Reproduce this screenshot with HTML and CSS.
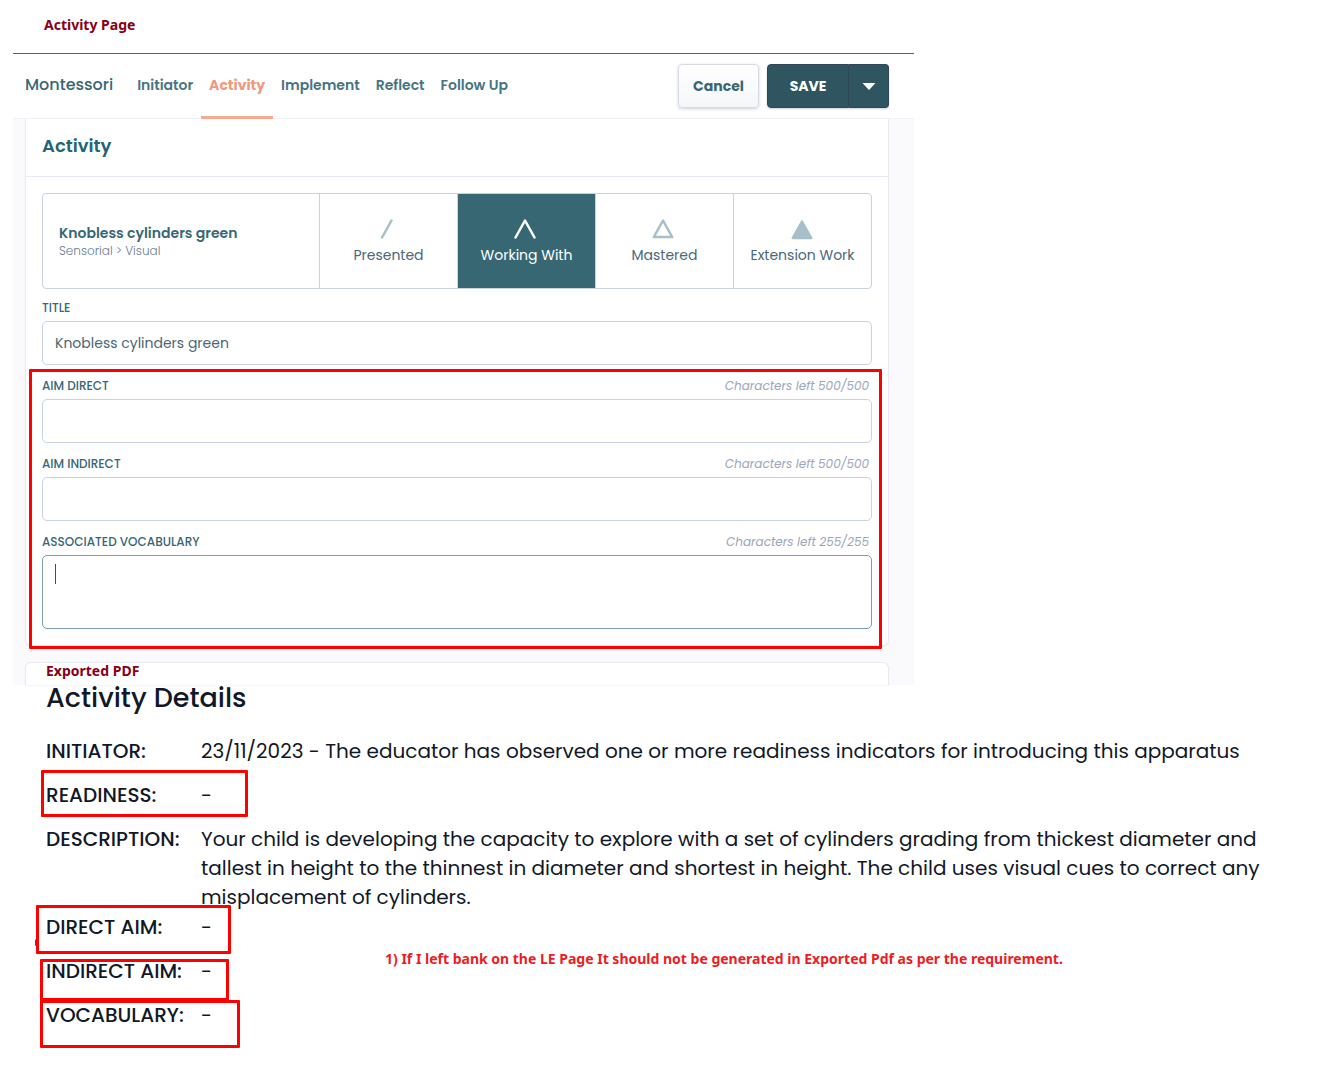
FILE: index.html
```html
<!DOCTYPE html>
<html lang="en">
<head>
<meta charset="utf-8">
<title>Activity Page</title>
<link rel="stylesheet" href="styles.css">
</head>
<body>
<main class="page">
  <h1 class="note page-note">Activity Page</h1>

  <section class="app">
    <header class="topbar">
      <span class="brand">Montessori</span>
      <nav class="tabs">
        <a class="tab" href="#initiator">Initiator</a>
        <a class="tab tab-active" href="#activity">Activity</a>
        <a class="tab" href="#implement">Implement</a>
        <a class="tab" href="#reflect">Reflect</a>
        <a class="tab" href="#follow-up">Follow Up</a>
      </nav>
      <div class="actions">
        <button class="btn btn-cancel" type="button">Cancel</button>
        <div class="split">
          <button class="btn btn-save" type="button">SAVE</button>
          <button class="btn btn-more" type="button" aria-label="More save options">
            <svg width="14" height="7" viewBox="0 0 14 7"><path d="M0.500 0h13L7 7z" fill="#fff"/></svg>
          </button>
        </div>
      </div>
    </header>

    <div class="content">
      <form class="card" id="activity">
        <h2 class="card-title">Activity</h2>
        <div class="card-body">
          <div class="status">
            <div class="lesson">
              <strong class="lesson-name">Knobless cylinders green</strong>
              <span class="lesson-path">Sensorial &gt; Visual</span>
            </div>
            <button class="state" type="button">
              <svg class="state-icon" viewBox="0 0 24 22"><path d="M6 19.500L15.500 2.500" /></svg>
              Presented
            </button>
            <button class="state state-on" type="button" aria-pressed="true">
              <svg class="state-icon" viewBox="0 0 24 22"><path d="M1.500 19.500L11 2.500L20.500 19.500"/></svg>
              Working With
            </button>
            <button class="state" type="button">
              <svg class="state-icon" viewBox="0 0 24 22"><path d="M11 2.500L1.800 19H20.200Z"/></svg>
              Mastered
            </button>
            <button class="state" type="button">
              <svg class="state-icon" viewBox="0 0 24 22"><path class="solid" d="M12 3.500L2.800 20H21.200Z"/></svg>
              Extension Work
            </button>
          </div>

          <div class="field field-title">
            <div class="field-head"><label for="title">TITLE</label></div>
            <input class="control" id="title" type="text" value="Knobless cylinders green">
          </div>

          <div class="flagged-fields">
            <div class="field">
              <div class="field-head"><label for="direct">AIM DIRECT</label><span class="left">Characters left 500/500</span></div>
              <input class="control" id="direct" type="text">
            </div>
            <div class="field">
              <div class="field-head"><label for="indirect">AIM INDIRECT</label><span class="left">Characters left 500/500</span></div>
              <input class="control" id="indirect" type="text">
            </div>
            <div class="field">
              <div class="field-head"><label for="vocabulary">ASSOCIATED VOCABULARY</label><span class="left">Characters left 255/255</span></div>
              <div class="area">
                <textarea class="control control-area" id="vocabulary"></textarea>
                <span class="caret"></span>
              </div>
            </div>
          </div>
        </div>
      </form>

      <div class="card card-next">
        <p class="note">Exported PDF</p>
      </div>
    </div>
  </section>

  <section class="export">
    <h2 class="export-title">Activity Details</h2>
    <dl class="details">
      <div class="row"><dt>INITIATOR:</dt><dd>23/11/2023 - The educator has observed one or more readiness indicators for introducing this apparatus</dd></div>
      <div class="row mark mark-readiness"><dt>READINESS:</dt><dd>-</dd></div>
      <div class="row"><dt>DESCRIPTION:</dt><dd>Your child is developing the capacity to explore with a set of cylinders grading from thickest diameter and tallest in height to the thinnest in diameter and shortest in height. The child uses visual cues to correct any misplacement of cylinders.</dd></div>
      <div class="row row-tight mark mark-direct"><dt>DIRECT AIM:</dt><dd>-</dd></div>
      <div class="row mark mark-indirect"><dt>INDIRECT AIM:</dt><dd>-</dd></div>
      <div class="row mark mark-vocabulary"><dt>VOCABULARY:</dt><dd>-</dd></div>
    </dl>
    <p class="note remark">1) If I left bank on the LE Page It should not be generated in Exported Pdf as per the requirement.</p>
  </section>
</main>
</body>
</html>
```
FILE: styles.css
```css
*, *::before, *::after { box-sizing: border-box; }

body {
  margin: 0;
  background: #fff;
  color: #376775;
  font-family: Poppins, Inter, sans-serif;
  font-size: 14px;
}

h1, h2, p, dl, dd { margin: 0; }
button, input, textarea { font: inherit; color: inherit; }

.page { padding: 14px 13px 40px; }

.note {
  color: #880015;
  font: 700 14px/22px "Segoe UI", "Noto Sans", "Open Sans", sans-serif;
}
.page-note { padding-left: 31px; margin-bottom: 17px; }

/* Form screen */
.app {
  max-width: 901px;
  border-top: 1px solid #5f6062;
}

.topbar {
  display: flex;
  align-items: center;
  height: 65px;
  padding: 0 25px 0 12px;
  border-bottom: 1px solid #f1f2f5;
}
.brand {
  font-size: 16px;
  font-weight: 500;
  line-height: 24px;
  margin-right: 16px;
  padding-bottom: 2px;
}
.tabs { display: flex; align-self: stretch; }
.tab {
  display: flex;
  align-items: center;
  padding: 0 8px;
  margin-bottom: -1px;
  border-bottom: 3px solid transparent;
  color: #467482;
  font-weight: 600;
  text-decoration: none;
}
.tab-active { color: #ef9a7d; border-color: #f7a98f; font-weight: 700; }

.actions { display: flex; gap: 8px; margin-left: auto; }
.btn {
  height: 44px;
  padding: 0;
  border: 1px solid #d9d9e8;
  font-weight: 700;
}
.btn-cancel {
  width: 81px;
  border-radius: 4px;
  background: linear-gradient(#fff, #f4f6f9);
  box-shadow: 0 1px 3px rgba(60, 70, 90, 0.25);
}
.split {
  display: flex;
  border-radius: 4px;
  box-shadow: 0 1px 2px rgba(60, 70, 90, 0.25);
}
.btn-save, .btn-more {
  border-color: #30475a;
  background: #2f5561;
  color: #fff;
}
.btn-save { width: 82px; border-radius: 4px 0 0 4px; }
.btn-more {
  display: flex;
  align-items: center;
  justify-content: center;
  width: 40px;
  border-left: 0;
  border-radius: 0 4px 4px 0;
}

.content {
  padding: 0 25px 0 12px;
  background: #fafafd;
}
.card {
  border: 1px solid #e8eaf3;
  border-radius: 6px;
  background: #fff;
  box-shadow: 0 1px 2px rgba(60, 70, 110, 0.06);
}
#activity { border-top: 0; border-radius: 0 0 6px 6px; }
.card-title {
  padding: 14px 16px 17px;
  border-bottom: 1px solid #e8eaf3;
  color: #226577;
  font-size: 18px;
  font-weight: 600;
  line-height: 26px;
}
.card-body { padding: 16px; }
.card-next {
  margin-top: 16px;
  padding: 0 0 6px 20px;
  border-bottom: 0;
  border-radius: 6px 6px 0 0;
}
.card-next .note { line-height: 16px; }

.status {
  display: grid;
  grid-template-columns: 2fr repeat(4, 1fr);
  height: 96px;
  border: 1px solid #c8d3df;
  border-radius: 4px;
}
.lesson {
  display: flex;
  flex-direction: column;
  justify-content: center;
  padding: 0 16px;
}
.lesson-name { font-weight: 600; line-height: 20px; }
.lesson-path { color: #6b7d92; font-size: 12px; font-weight: 300; line-height: 16px; }
.state {
  display: flex;
  flex-direction: column;
  align-items: center;
  justify-content: center;
  gap: 4px;
  padding: 2px 0 0;
  border: 0;
  border-left: 1px solid #c8d3df;
  background: none;
  color: #4a687a;
  line-height: 22px;
}
.state-icon {
  width: 24px;
  height: 22px;
  margin-right: 2px;
  fill: none;
  stroke: #a6bfc8;
  stroke-width: 2.5;
  stroke-linecap: round;
  stroke-linejoin: round;
}
.state-icon .solid { fill: #a6bfc8; }
.state-on { background: #366773; color: #fff; }
.state-on .state-icon { stroke: #fff; }

.field { padding-top: 11px; }
.field-title { padding-top: 9px; }
.field-head {
  display: flex;
  justify-content: space-between;
  height: 18px;
  margin-bottom: 5px;
  padding-right: 3px;
  font-size: 12px;
  font-weight: 500;
  line-height: 20px;
}
.left { color: #9ba6bb; font-style: italic; font-weight: 400; }
.control {
  display: block;
  width: 100%;
  height: 44px;
  padding: 0 12px;
  border: 1px solid #c8d3e2;
  border-radius: 5px;
  background: #fff;
  color: #4c6676;
  outline: 0;
}
.area { position: relative; }
.control-area { height: 74px; padding: 8px 12px; border-color: #7b9ea8; resize: none; }
.caret {
  position: absolute;
  top: 9px;
  left: 13px;
  width: 1px;
  height: 20px;
  background: #2f5561;
}

/* Red review boxes */
.flagged-fields, .mark { position: relative; }
.flagged-fields::after, .mark::after {
  content: "";
  position: absolute;
  border: 3px solid #fe0000;
  border-radius: 1px;
  pointer-events: none;
}
.flagged-fields::after { inset: 4px -10px -20px -13px; }
.mark-readiness::after { top: -11px; left: -5px; width: 207px; height: 47px; }
.mark-direct::after { top: -8px; left: -10px; width: 195px; height: 49px; }
.mark-direct::before {
  content: "";
  position: absolute;
  top: 26px;
  left: -11px;
  width: 3px;
  height: 7px;
  border-radius: 2px;
  background: #fe0000;
}
.mark-indirect::after { top: 2px; left: -6px; width: 189px; height: 42px; }
.mark-vocabulary::after { top: -1px; left: -6px; width: 200px; height: 48px; }

/* Exported document */
.export {
  position: relative;
  max-width: 1250px;
  padding-left: 33px;
  color: #111827;
}
.export-title {
  margin-bottom: 26px;
  font-size: 27px;
  font-weight: 500;
  line-height: 26px;
}
.row {
  display: grid;
  grid-template-columns: 155px 1fr;
  margin-top: 15px;
  font-size: 20px;
  line-height: 29px;
}
.row:first-child { margin-top: 0; }
.row-tight { margin-top: 1px; }
dt { font-weight: 500; }
.remark {
  position: absolute;
  top: 263px;
  left: 372px;
  color: #ed1c24;
}
```
